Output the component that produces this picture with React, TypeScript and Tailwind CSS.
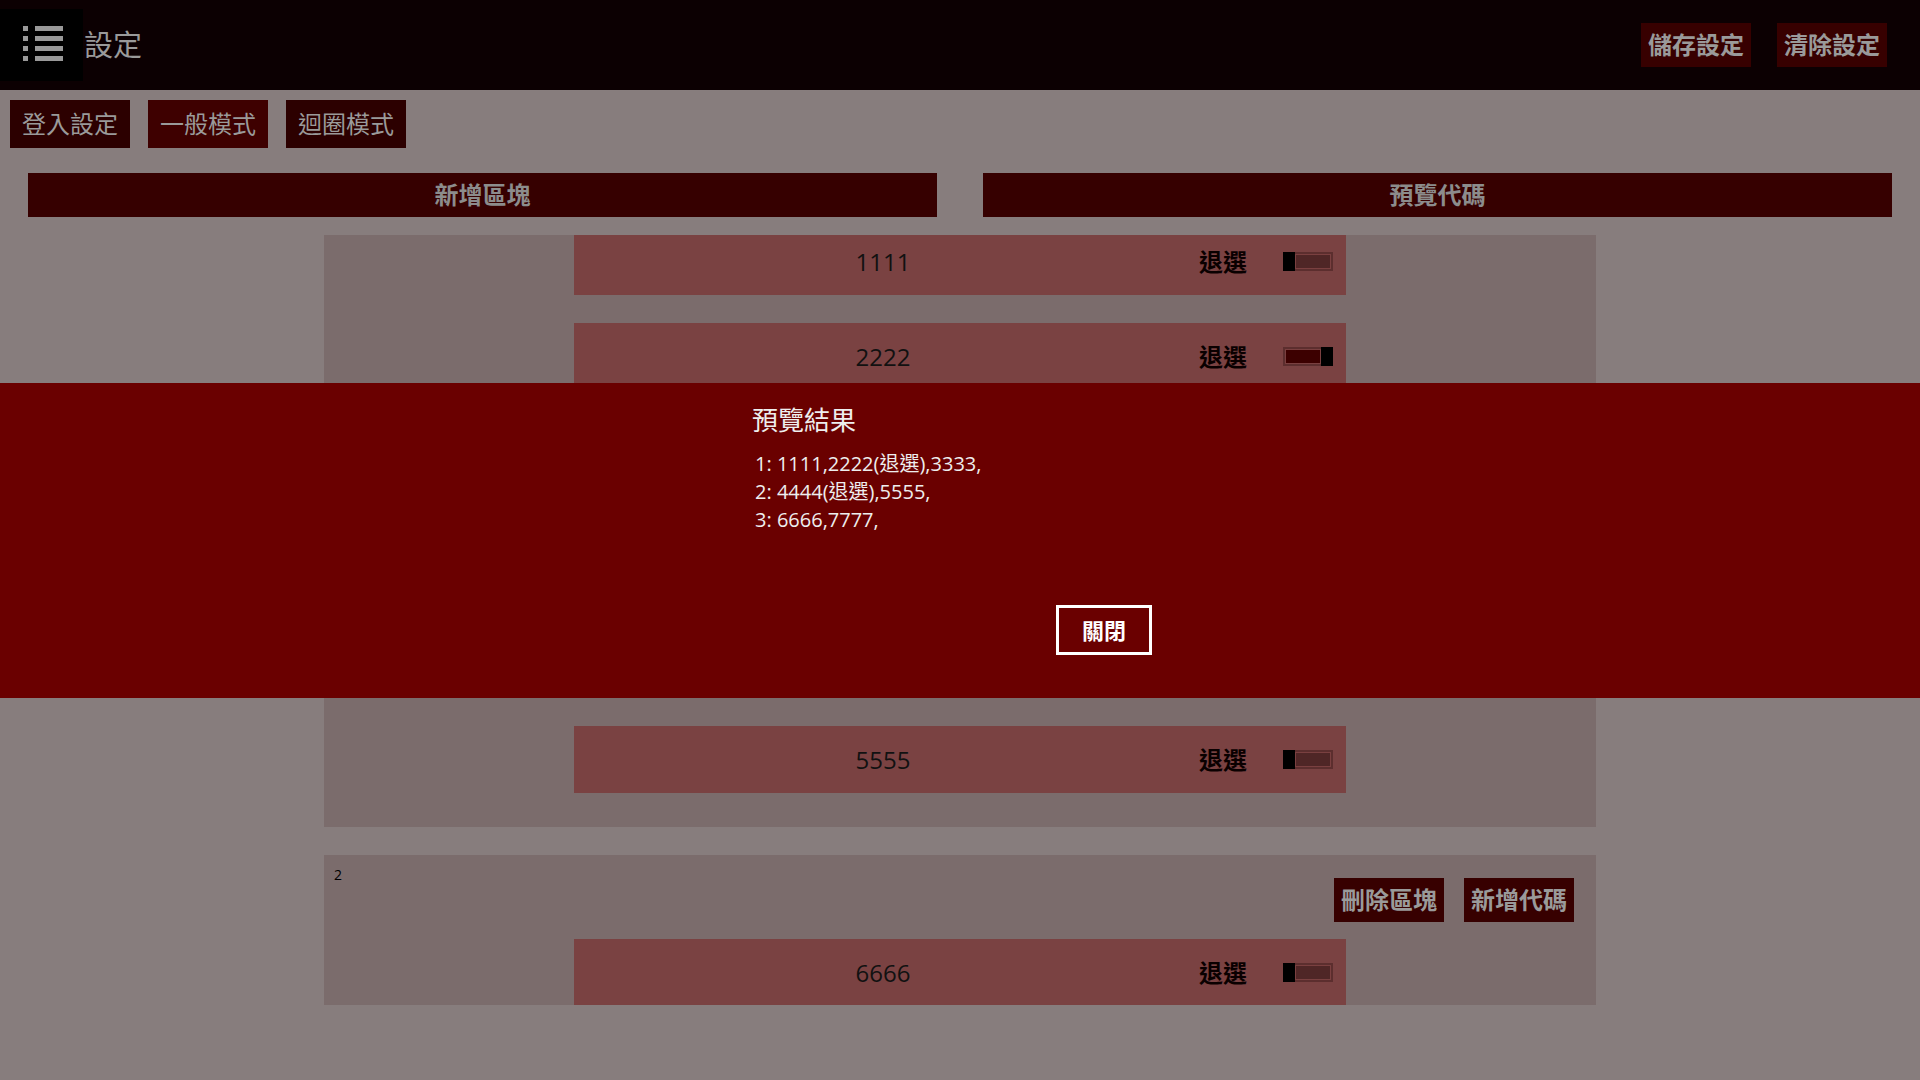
import React from "react";

type Item = { code: string; off?: boolean };
type Block = { items: Item[] };

const blocks: Block[] = [
  { items: [{ code: "1111" }, { code: "2222", off: true }, { code: "3333" }] },
  { items: [{ code: "4444", off: true }, { code: "5555" }] },
  { items: [{ code: "6666" }, { code: "7777" }] },
];

const font = { fontFamily: '"Open Sans", "Noto Sans CJK TC", sans-serif' };

function MenuIcon() {
  return (
    <div className="flex h-[72px] w-[83px] items-center justify-center bg-black">
      <svg width="83" height="72" viewBox="0 0 83 72">
        {[0, 1, 2, 3].map((i) => (
          <g key={i} fill="#999">
            <rect x="23" y={17 + i * 10} width="5" height="5" />
            <rect x="35" y={17 + i * 10} width="28" height="5" />
          </g>
        ))}
      </svg>
    </div>
  );
}

function Toggle({ on }: { on?: boolean }) {
  if (on) {
    return (
      <div className="flex h-[19px] w-[50px]">
        <div className="flex-1 border-2 border-r-0 border-[#5c2e2e] bg-[#3c0000] shadow-[inset_0_0_0_1px_#7a4040]" />
        <div className="h-full w-[12px] bg-black" />
      </div>
    );
  }
  return (
    <div className="flex h-[19px] w-[50px]">
      <div className="h-full w-[12px] bg-black" />
      <div className="flex-1 border-2 border-l-0 border-[#5c2e2e] bg-[#4f2626] shadow-[inset_0_0_0_1px_#7a4040]" />
    </div>
  );
}

function Row({ item }: { item: Item }) {
  return (
    <div className="flex h-[67px] w-[772px] shrink-0 items-center bg-[#7a4242] pr-[13px]">
      <div className="w-[618px] text-center text-[24px] leading-[32px] text-[#111]">{item.code}</div>
      <div className="ml-[7px] text-[24px] font-bold leading-[32px] text-[#0a0000]">退選</div>
      <div className="ml-[36px]">
        <Toggle on={item.off} />
      </div>
    </div>
  );
}

function DarkButton({ label, className = "" }: { label: string; className?: string }) {
  return (
    <button
      className={`flex items-center justify-center whitespace-nowrap bg-[#370000] text-[24px] font-bold leading-[30px] text-[#9a9a9a] ${className}`}
    >
      {label}
    </button>
  );
}

export default function App() {
  return (
    <div className="relative flex h-[1080px] w-[1920px] flex-col overflow-hidden bg-[#877d7d]" style={font}>
      <header className="flex h-[90px] shrink-0 items-center justify-between bg-[#0c0002]">
        <div className="flex items-center">
          <MenuIcon />
          <span className="ml-[1px] text-[29px] leading-[36px] text-[#9a9a9a]">設定</span>
        </div>
        <div className="flex gap-[26px] pr-[33px]">
          <DarkButton label="儲存設定" className="h-[44px] w-[110px] bg-[#3a0000]" />
          <DarkButton label="清除設定" className="h-[44px] w-[110px] bg-[#3a0000]" />
        </div>
      </header>

      <div className="flex gap-[18px] pl-[10px] pt-[10px]">
        <button className="h-[48px] w-[120px] whitespace-nowrap bg-[#2c0000] text-[24px] leading-[30px] text-[#9a9a9a]">登入設定</button>
        <button className="h-[48px] w-[120px] whitespace-nowrap bg-[#3e0000] text-[24px] leading-[30px] text-[#9a9a9a]">一般模式</button>
        <button className="h-[48px] w-[120px] whitespace-nowrap bg-[#2c0000] text-[24px] leading-[30px] text-[#9a9a9a]">迴圈模式</button>
      </div>

      <div className="mt-[25px] flex gap-[46px] px-[28px]">
        <div className="flex h-[44px] flex-1 items-center justify-center bg-[#360000] text-[24px] font-bold leading-[30px] text-[#8c8c8c]">新增區塊</div>
        <div className="flex h-[44px] flex-1 items-center justify-center bg-[#360000] text-[24px] font-bold leading-[30px] text-[#8c8c8c]">預覽代碼</div>
      </div>

      <div className="mt-[18px] h-[770px] shrink-0 overflow-hidden">
        <div className="-mt-[91px] flex flex-col items-center gap-[28px]">
          {blocks.map((block, bi) => (
            <div key={bi} className="w-[1272px] shrink-0 bg-[#7b6c6c] pb-[34px]">
              <div className="flex h-[84px] items-start justify-between">
                <span className="pl-[10px] pt-[10px] text-[14px] leading-[20px] text-black">{bi}</span>
                <div className="mr-[22px] mt-[23px] flex gap-[20px]">
                  <DarkButton label="刪除區塊" className="h-[44px] w-[110px]" />
                  <DarkButton label="新增代碼" className="h-[44px] w-[110px]" />
                </div>
              </div>
              <div className="flex flex-col items-center gap-[28px]">
                {block.items.map((item) => (
                  <Row key={item.code} item={item} />
                ))}
              </div>
            </div>
          ))}
        </div>
      </div>

      <div className="absolute left-0 top-[383px] h-[315px] w-full bg-[#6a0000]">
        <div className="ml-[752px] flex w-[400px] flex-col pt-[20px] text-[#eeeeee]">
          <div className="text-[26px] leading-[34px]">預覽結果</div>
          <div className="mt-[13px] pl-[3px] text-[20px] leading-[28px]">
            <div>1: 1111,2222(退選),3333,</div>
            <div>2: 4444(退選),5555,</div>
            <div>3: 6666,7777,</div>
          </div>
          <button className="mt-[71px] flex h-[50px] w-[96px] items-center justify-center self-end border-[3px] border-white text-[22px] font-bold leading-[28px] text-white">
            關閉
          </button>
        </div>
      </div>
    </div>
  );
}
